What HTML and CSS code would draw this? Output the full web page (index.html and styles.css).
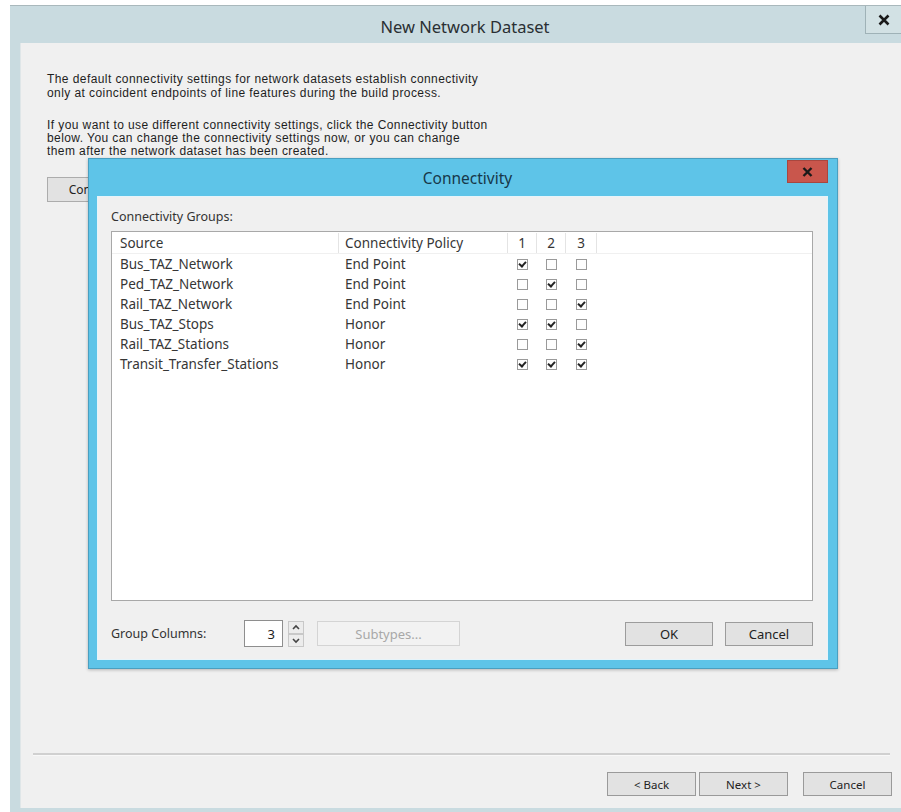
FILE: index.html
```html
<!DOCTYPE html>
<html lang="en">
<head>
<meta charset="utf-8">
<title>New Network Dataset</title>
<link rel="stylesheet" href="styles.css">
</head>
<body>
<div class="window">
  <div class="titlebar">
    <div class="title">New Network Dataset</div>
    <div class="close">
      <svg width="12" height="12" viewBox="0 0 12 12"><path d="M1.5 1.5 L10.5 10.5 M10.5 1.5 L1.5 10.5" stroke="#1a1a1a" stroke-width="2.6"/></svg>
    </div>
  </div>
  <div class="body">
    <p class="intro">The default connectivity settings for network datasets establish connectivity<br>only at coincident endpoints of line features during the build process.</p>
    <p class="intro second">If you want to use different connectivity settings, click the Connectivity button<br>below. You can change the connectivity settings now, or you can change<br>them after the network dataset has been created.</p>
    <div class="btn conn-btn">Connectivity...</div>
    <div class="spacer"></div>
    <div class="separator"></div>
    <div class="wizard-buttons">
      <div class="btn wiz">&lt; Back</div>
      <div class="btn wiz">Next &gt;</div>
      <div class="btn wiz cancel">Cancel</div>
    </div>
  </div>

  <!-- modal connectivity dialog floating over the wizard page -->
  <div class="dialog">
    <div class="dlg-titlebar">
      <div class="dlg-title">Connectivity</div>
      <div class="dlg-close">
        <svg width="11" height="10" viewBox="0 0 11 10"><path d="M1.5 1 L9.5 9 M9.5 1 L1.5 9" stroke="#1a1a1a" stroke-width="2.4"/></svg>
      </div>
    </div>
    <div class="dlg-body">
      <div class="label">Connectivity Groups:</div>
      <div class="list">
        <div class="grid head">
          <div class="c src">Source</div>
          <div class="c pol">Connectivity Policy</div>
          <div class="c n">1</div>
          <div class="c n">2</div>
          <div class="c n">3</div>
          <div class="c rest"></div>
        </div>
        <div class="grid row">
          <div class="c src">Bus_TAZ_Network</div><div class="c pol">End Point</div>
          <div class="c n"><span class="cb on"></span></div><div class="c n"><span class="cb"></span></div><div class="c n"><span class="cb"></span></div><div class="c rest"></div>
        </div>
        <div class="grid row">
          <div class="c src">Ped_TAZ_Network</div><div class="c pol">End Point</div>
          <div class="c n"><span class="cb"></span></div><div class="c n"><span class="cb on"></span></div><div class="c n"><span class="cb"></span></div><div class="c rest"></div>
        </div>
        <div class="grid row">
          <div class="c src">Rail_TAZ_Network</div><div class="c pol">End Point</div>
          <div class="c n"><span class="cb"></span></div><div class="c n"><span class="cb"></span></div><div class="c n"><span class="cb on"></span></div><div class="c rest"></div>
        </div>
        <div class="grid row">
          <div class="c src">Bus_TAZ_Stops</div><div class="c pol">Honor</div>
          <div class="c n"><span class="cb on"></span></div><div class="c n"><span class="cb on"></span></div><div class="c n"><span class="cb"></span></div><div class="c rest"></div>
        </div>
        <div class="grid row">
          <div class="c src">Rail_TAZ_Stations</div><div class="c pol">Honor</div>
          <div class="c n"><span class="cb"></span></div><div class="c n"><span class="cb"></span></div><div class="c n"><span class="cb on"></span></div><div class="c rest"></div>
        </div>
        <div class="grid row">
          <div class="c src">Transit_Transfer_Stations</div><div class="c pol">Honor</div>
          <div class="c n"><span class="cb on"></span></div><div class="c n"><span class="cb on"></span></div><div class="c n"><span class="cb on"></span></div><div class="c rest"></div>
        </div>
      </div>
      <div class="bottom-row">
        <div class="gc-label">Group Columns:</div>
        <div class="num">3</div>
        <div class="spin">
          <svg width="16" height="26" viewBox="0 0 16 26">
            <rect x="0.5" y="0.5" width="15" height="12" fill="#ececec" stroke="#c8c8c8"/>
            <rect x="0.5" y="13.5" width="15" height="12" fill="#ececec" stroke="#c8c8c8"/>
            <path d="M5 8 L8 5 L11 8" fill="none" stroke="#444" stroke-width="1.6"/>
            <path d="M5 18 L8 21 L11 18" fill="none" stroke="#444" stroke-width="1.6"/>
          </svg>
        </div>
        <div class="btn subtypes">Subtypes...</div>
        <div class="grow"></div>
        <div class="btn dbtn">OK</div>
        <div class="btn dbtn">Cancel</div>
      </div>
    </div>
  </div>
</div>
</body>
</html>
```
FILE: styles.css
```css
html, body {
  margin: 0;
  padding: 0;
  background: #ffffff;
}

body {
  width: 901px;
  height: 812px;
  overflow: hidden;
}

.window {
  position: relative;
  margin: 5px 0 0 10px;
  width: 891px;
  height: 807px;
  background: #c9dbe0;
  border-top: 1px solid #a9b8bc;
  box-sizing: border-box;
  display: flex;
  flex-direction: column;
}

.titlebar {
  height: 37px;
  display: flex;
  align-items: stretch;
  flex: none;
}

.title {
  flex: 1;
  padding-left: 55px;
  padding-top: 4px;
  display: flex;
  align-items: center;
  justify-content: center;
  font-family: "Noto Sans", "Open Sans", sans-serif;
  font-size: 16.5px;
  color: #2a2f33;
}

.close {
  width: 35px;
  height: 27px;
  border-left: 1px solid #9fb2b7;
  border-bottom: 1px solid #9fb2b7;
  background: #d2e1e4;
  display: flex;
  align-items: center;
  justify-content: center;
}

.body {
  flex: 1;
  margin-left: 10px;
  margin-bottom: 4px;
  background: #f0f0f0;
  border-left: 1px solid #dfe6e8;
  padding: 29px 0 12px 26px;
  display: flex;
  flex-direction: column;
  font-family: "Liberation Sans", Arial, sans-serif;
  font-size: 12px;
  letter-spacing: 0.42px;
  color: #1e1e1e;
}

.intro {
  margin: 0;
  line-height: 14px;
}

.intro.second {
  margin-top: 19px;
  line-height: 13px;
}

.btn {
  box-sizing: border-box;
  background: #e2e2e2;
  border: 1px solid #acacac;
  display: flex;
  align-items: center;
  justify-content: center;
  font-family: "Noto Sans", "Open Sans", sans-serif;
  font-size: 12px;
  letter-spacing: 0;
  color: #222;
}

.conn-btn {
  margin-top: 19px;
  width: 122px;
  height: 25px;
}

.spacer {
  flex: 1;
}

.separator {
  height: 2px;
  margin: 0 11px 0 -14px;
  background: #d0d0d0;
  border-bottom: 1px solid #f8f8f8;
}

.wizard-buttons {
  display: flex;
  justify-content: flex-end;
  margin-top: 16px;
  padding-right: 9px;
  gap: 3px;
}

.btn.wiz {
  width: 89px;
  height: 24px;
  border-color: #9a9a9a;
  font-size: 11.5px;
}

.btn.wiz.cancel {
  margin-left: 12px;
}

/* connectivity dialog */
.dialog {
  position: absolute;
  left: 78px;
  top: 152px;
  width: 750px;
  height: 511px;
  box-sizing: border-box;
  background: #5ec4e8;
  border: 1px solid #4a9fc0;
  box-shadow: 0 1px 3px rgba(0, 0, 0, 0.25);
  display: flex;
  flex-direction: column;
  padding: 0 9px 8px 8px;
}

.dlg-titlebar {
  height: 37px;
  flex: none;
  display: flex;
  position: relative;
}

.dlg-title {
  flex: 1;
  display: flex;
  align-items: center;
  justify-content: center;
  font-family: "Noto Sans", "Open Sans", sans-serif;
  font-size: 15.5px;
  color: #17384a;
  padding-left: 10px;
}

.dlg-close {
  position: absolute;
  right: 0;
  top: 1px;
  width: 41px;
  height: 23px;
  background: #c9564c;
  border: 1px solid #a9463e;
  box-sizing: border-box;
  display: flex;
  align-items: center;
  justify-content: center;
}

.dlg-body {
  flex: 1;
  background: #f0f0f0;
  border: 1px solid #e6f4fa;
  padding: 12px 14px 12px 13px;
  display: flex;
  flex-direction: column;
  font-family: "Noto Sans", "Open Sans", sans-serif;
  color: #333;
}

.label {
  height: 15px;
  line-height: 15px;
  font-size: 12.5px;
  color: #333;
}

.list {
  margin-top: 7px;
  height: 370px;
  box-sizing: border-box;
  background: #ffffff;
  border: 1px solid #a8a8a8;
  padding-top: 1px;
}

.grid {
  display: grid;
  grid-template-columns: 227px 169px 29px 29px 31px 1fr;
}

.head {
  height: 20px;
  border-bottom: 1px solid #f0f0f0;
}

.head .c {
  border-right: 1px solid #e4e4e4;
}

.head .c.rest {
  border-right: none;
}

.row {
  height: 20px;
}

.c {
  display: flex;
  align-items: center;
  white-space: nowrap;
  font-size: 13.5px;
  color: #363636;
}

.c.src {
  padding-left: 8px;
}

.c.pol {
  padding-left: 6px;
}

.c.n {
  justify-content: center;
}

.cb {
  width: 11px;
  height: 11px;
  box-sizing: border-box;
  border: 1px solid #9a9a9a;
  background: #fdfdfd;
  position: relative;
}

.cb.on::after {
  content: "";
  position: absolute;
  top: 1px;
  left: 1px;
  width: 5px;
  height: 3px;
  border-left: 2px solid #222;
  border-bottom: 2px solid #222;
  transform: rotate(-48deg);
  transform-origin: 50% 50%;
}

.bottom-row {
  margin-top: 19px;
  height: 27px;
  display: flex;
  align-items: center;
}

.gc-label {
  width: 133px;
  font-size: 12.5px;
  color: #333;
}

.num {
  width: 39px;
  height: 27px;
  box-sizing: border-box;
  border: 1px solid #8e8e8e;
  background: #ffffff;
  display: flex;
  align-items: center;
  justify-content: flex-end;
  padding-right: 7px;
  font-size: 13px;
  color: #222;
}

.spin {
  margin-left: 5px;
  height: 26px;
}

.spin svg {
  display: block;
}

.btn.subtypes {
  margin-left: 13px;
  width: 143px;
  height: 25px;
  background: #f2f2f2;
  border-color: #d4d4d4;
  color: #a8a8a8;
  font-size: 13px;
}

.grow {
  flex: 1;
}

.btn.dbtn {
  width: 88px;
  height: 24px;
  margin-left: 12px;
  border-color: #9c9c9c;
  font-size: 13px;
}
```
